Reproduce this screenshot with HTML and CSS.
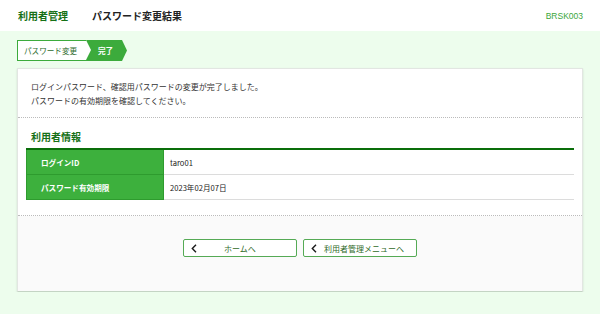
FILE: index.html
```html
<!DOCTYPE html>
<html lang="ja">

<head>
  <meta charset="UTF-8">
  <meta name="viewport" content="width=device-width, initial-scale=1.0">
  <title>パスワード変更結果</title>
  <link rel="stylesheet" href="styles.css">
</head>

<body>
  <header class="pageHeader">
    <div class="headerTitles">
      <span class="menuName">利用者管理</span>
      <span class="screenName">パスワード変更結果</span>
    </div>
    <span class="screenId">BRSK003</span>
  </header>

  <main class="pageMain">
    <ol class="steps">
      <li class="step stepDone">パスワード変更</li>
      <li class="step stepCurrent">完了</li>
    </ol>

    <div class="card">
      <div class="message">
        <p>ログインパスワード、確認用パスワードの変更が完了しました。</p>
        <p>パスワードの有効期限を確認してください。</p>
      </div>

      <div class="infoSection">
        <h2 class="sectionTitle">利用者情報</h2>
        <table class="infoTable">
          <tr>
            <th>ログインID</th>
            <td>taro01</td>
          </tr>
          <tr>
            <th>パスワード有効期限</th>
            <td>2023年02月07日</td>
          </tr>
        </table>
      </div>

      <div class="actions">
        <button class="backButton">
          <svg class="chevron" width="6" height="9" viewBox="0 0 6 9"><path d="M5 0.8 L1.3 4.5 L5 8.2" fill="none" stroke="#1a1a1a" stroke-width="1.4"/></svg>
          <span>ホームへ</span>
        </button>
        <button class="backButton">
          <svg class="chevron" width="6" height="9" viewBox="0 0 6 9"><path d="M5 0.8 L1.3 4.5 L5 8.2" fill="none" stroke="#1a1a1a" stroke-width="1.4"/></svg>
          <span>利用者管理メニューへ</span>
        </button>
      </div>
    </div>
  </main>
</body>

</html>
```

FILE: styles.css
```css
body {
  margin: 0;
  font-family: "Noto Sans CJK JP", "Noto Sans", sans-serif;
  background-color: #edfded;
  color: #333;
}

p {
  margin: 0;
}

/* Header */
.pageHeader {
  height: 31px;
  background: #fff;
  display: flex;
  align-items: center;
  justify-content: space-between;
  padding: 0 17px 0 18px;
}

.headerTitles {
  display: flex;
  align-items: center;
  gap: 24px;
}

.menuName {
  font-size: 10px;
  font-weight: bold;
  color: #167016;
}

.screenName {
  font-size: 10px;
  font-weight: bold;
  color: #222;
}

.screenId {
  font-family: "Liberation Sans", Arial, sans-serif;
  font-size: 8.5px;
  color: #3aa63a;
}

.pageMain {
  padding: 9px 17px 0;
}

/* Steps */
.steps {
  list-style: none;
  margin: 0 0 7px;
  padding: 0;
  display: flex;
  height: 21px;
}

.step {
  display: flex;
  align-items: center;
  font-size: 7.6px;
  box-sizing: border-box;
  height: 21px;
}

.stepDone {
  position: relative;
  z-index: 1;
  width: 69px;
  padding-left: 6px;
  background: #fff;
  color: #2d6b2d;
  border: 1px solid #3cab3c;
  border-right: none;
}

.stepDone::after {
  content: "";
  position: absolute;
  right: -5px;
  top: -1px;
  border-top: 10.5px solid transparent;
  border-bottom: 10.5px solid transparent;
  border-left: 5px solid #fff;
}

.stepCurrent {
  width: 41px;
  padding-left: 12px;
  background: #3cab3c;
  color: #fff;
  font-weight: bold;
  clip-path: polygon(0 0, calc(100% - 5px) 0, 100% 50%, calc(100% - 5px) 100%, 0 100%);
}

/* Card */
.card {
  background: #fff;
  border: 1px solid #e2e6e2;
  border-bottom-color: #c4d4c4;
  box-shadow: 0 1px 2px rgba(0, 0, 0, 0.12);
}

.message {
  padding: 11px 13px 9px;
  font-size: 8px;
  line-height: 14px;
  border-bottom: 1px dotted #bbb;
}

.infoSection {
  padding: 12px 8px 15px;
  border-bottom: 1px dotted #bbb;
}

.sectionTitle {
  margin: 0 0 4px 5px;
  font-size: 10px;
  line-height: 14px;
  color: #167016;
}

.infoTable {
  width: 100%;
  border-collapse: collapse;
  border-top: 2px solid #0a6e0a;
  font-size: 7.6px;
}

.infoTable th,
.infoTable td {
  height: 24px;
}

.infoTable th {
  width: 122px;
  padding: 0 0 0 14px;
  text-align: left;
  background: #3db03d;
  color: #fff;
  border: 1px solid #2e9b2e;
  border-top: none;
}

.infoTable td {
  padding: 0 6px;
  color: #222;
  border-bottom: 1px solid #dcdcdc;
}

.actions {
  background: #fafafa;
  display: flex;
  justify-content: center;
  gap: 6px;
  padding: 23px 0 34px;
}

.backButton {
  width: 114px;
  height: 18px;
  position: relative;
  display: flex;
  align-items: center;
  justify-content: center;
  padding: 0;
  background: #fff;
  border: 1px solid #55aa55;
  border-radius: 2px;
  font-family: inherit;
  font-size: 8px;
  color: #2f6a1f;
}

.chevron {
  position: absolute;
  left: 7px;
  top: 4px;
}

.backButton:last-child span {
  margin-left: 8px;
}
```
